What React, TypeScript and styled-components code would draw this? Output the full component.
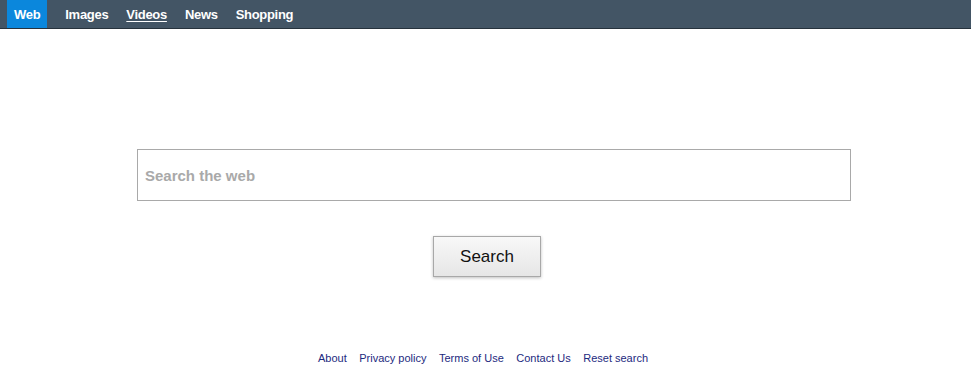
import React from "react";
import styled, { createGlobalStyle } from "styled-components";

const Global = createGlobalStyle`
  html, body { margin: 0; padding: 0; background: #fff; }
  body { font-family: Arial, "Liberation Sans", sans-serif; }
`;

const Page = styled.div`
  width: 971px;
  height: 387px;
  display: flex;
  flex-direction: column;
`;

const TopBar = styled.nav`
  height: 28px;
  background: #435565;
  border-bottom: 1px solid #26323c;
  display: flex;
  align-items: stretch;
  padding-left: 7px;
`;

const Tab = styled.a<{ $active?: boolean; $underline?: boolean }>`
  display: flex;
  align-items: center;
  padding: 0 ${(p) => (p.$active ? "7px" : "9px")};
  margin-right: ${(p) => (p.$active ? "9px" : "0")};
  font-size: 13px;
  font-weight: bold;
  letter-spacing: -0.3px;
  color: #fff;
  background: ${(p) => (p.$active ? "#0b87dc" : "transparent")};
  text-decoration: ${(p) => (p.$underline ? "underline" : "none")};
  text-underline-offset: 2px;
  cursor: pointer;
`;

const Main = styled.main`
  display: flex;
  flex-direction: column;
  align-items: center;
  padding-top: 120px;
`;

const SearchInput = styled.input`
  box-sizing: border-box;
  width: 714px;
  height: 52px;
  margin-left: 17px;
  border: 1px solid #a9a9a9;
  padding: 0 7px;
  font-family: Arial, "Liberation Sans", sans-serif;
  font-size: 15px;
  font-weight: bold;
  color: #333;
  outline: none;
  &::placeholder { color: #a9a9a9; }
`;

const SearchButton = styled.button`
  box-sizing: border-box;
  margin-top: 35px;
  margin-left: 3px;
  width: 108px;
  height: 41px;
  border: 1px solid #a8a8a8;
  background: linear-gradient(#f8f8f8, #e6e6e6);
  box-shadow: 0 1px 3px rgba(0, 0, 0, 0.25);
  font-family: Arial, "Liberation Sans", sans-serif;
  font-size: 17px;
  color: #111;
  cursor: pointer;
`;

const Footer = styled.footer`
  display: flex;
  justify-content: center;
  gap: 12.5px;
  margin-top: 75px;
  padding-right: 5px;
`;

const FooterLink = styled.a`
  font-size: 11px;
  color: #1d2a80;
  text-decoration: none;
  cursor: pointer;
`;

const tabs = [
  { label: "Web", active: true },
  { label: "Images" },
  { label: "Videos", underline: true },
  { label: "News" },
  { label: "Shopping" },
];

const links = ["About", "Privacy policy", "Terms of Use", "Contact Us", "Reset search"];

export default function App() {
  return (
    <Page>
      <Global />
      <TopBar>
        {tabs.map((t) => (
          <Tab key={t.label} $active={t.active} $underline={t.underline}>
            {t.label}
          </Tab>
        ))}
      </TopBar>
      <Main>
        <SearchInput placeholder="Search the web" />
        <SearchButton>Search</SearchButton>
      </Main>
      <Footer>
        {links.map((l) => (
          <FooterLink key={l}>{l}</FooterLink>
        ))}
      </Footer>
    </Page>
  );
}
